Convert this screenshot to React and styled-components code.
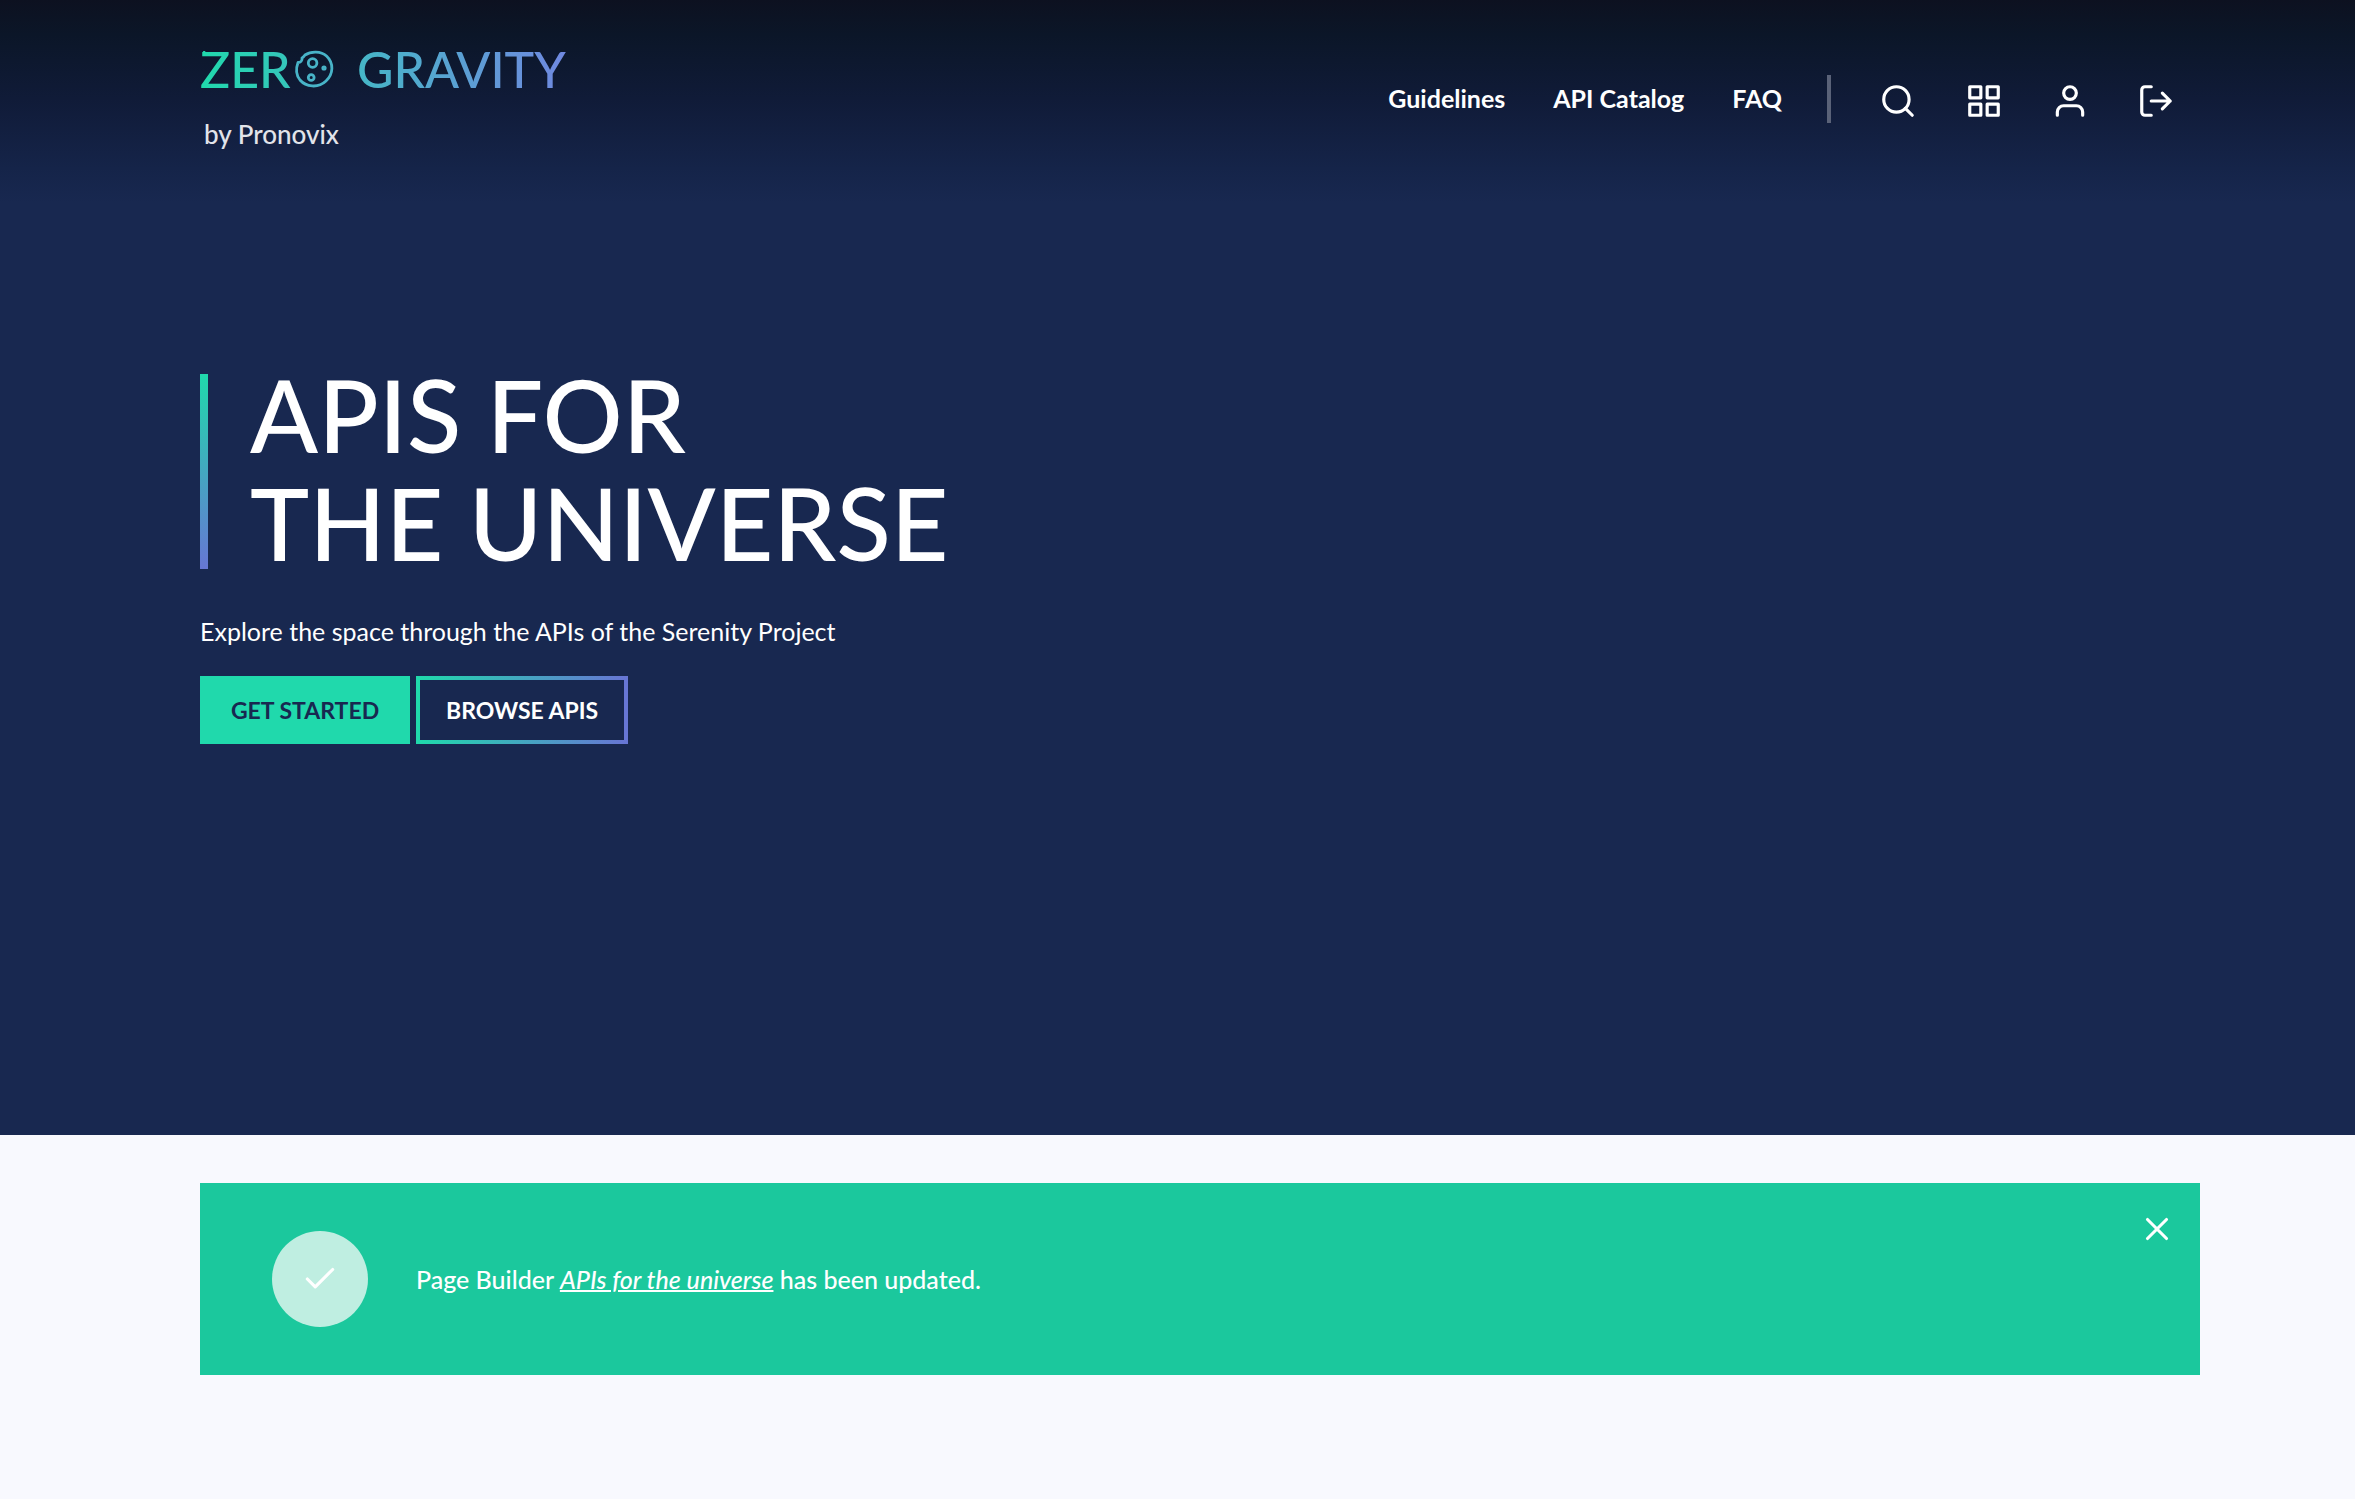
import React, { useState } from "react";
import styled, { createGlobalStyle } from "styled-components";

const GlobalStyle = createGlobalStyle`
  *, *::before, *::after { box-sizing: border-box; }
  body {
    margin: 0;
    background: #f8f9fe;
    font-family: Lato, "Open Sans", sans-serif;
    font-size: 25px;
    line-height: 36px;
    color: #fff;
  }
`;

const Hero = styled.div`
  background: #182850;
  padding-bottom: 391px;
`;

const Header = styled.header`
  display: flex;
  justify-content: space-between;
  align-items: flex-start;
  height: 216px;
  padding: 48px 155px 0 200px;
  background: linear-gradient(#0d1120, #0b1628 16%, #101b38 46%, #152449 78%, #182850 94%);
`;

const Brand = styled.a`
  display: flex;
  flex-direction: column;
  gap: 20px;
  color: #e2e4ea;
  text-decoration: none;
`;

const Wordmark = styled.svg`
  display: block;
  width: 368px;
  height: 48px;
  overflow: visible;
`;

const Byline = styled.span`
  padding-left: 4px;
  font-size: 26px;
  font-weight: 500;
  line-height: 36px;
`;

const HeaderRight = styled.div`
  display: flex;
  align-items: center;
  padding-top: 27px;
  padding-right: 25px;
`;

const MainNav = styled.nav`
  display: flex;
  gap: 48px;
  padding: 0 45px 2px 0;
`;

const NavLink = styled.a`
  color: #fff;
  font-weight: 700;
  text-decoration: none;
`;

const Tools = styled.div`
  display: flex;
  align-items: center;
  gap: 48px;
  height: 48px;
  padding: 4px 0 0 48px;
  border-left: 4px solid #5a6278;
`;

const IconButton = styled.button`
  display: flex;
  padding: 0;
  border: 0;
  background: none;
  color: #fff;
  cursor: pointer;
`;

const Glyph = styled.svg`
  display: block;
  width: 38px;
  height: 38px;
  fill: none;
  stroke: currentColor;
  stroke-width: 2;
  stroke-linecap: round;
  stroke-linejoin: round;
`;

const Intro = styled.main`
  padding: 158px 155px 0 200px;
`;

const TitleBar = styled.div`
  display: flex;
  align-items: center;
  height: 195px;
  padding: 0 0 8px 42px;
  border-left: 8px solid;
  border-image: linear-gradient(#20d9ac, #6776d4) 1;
`;

const Title = styled.h1`
  margin: 0;
  font-size: 100px;
  font-weight: 500;
  line-height: 108px;
  text-transform: uppercase;
`;

const Lead = styled.p`
  margin: 44px 0 27px;
`;

const Actions = styled.div`
  display: flex;
  gap: 6px;
`;

const Action = styled.a`
  display: flex;
  align-items: center;
  justify-content: center;
  min-width: 210px;
  height: 68px;
  padding: 0 26px;
  border: 4px solid;
  border-image: ${(p) => (p.$outline ? "linear-gradient(to right, #20d9ac, #6776d4) 1" : "none")};
  border-color: #20d9ac;
  background: ${(p) => (p.$outline ? "transparent" : "#20d9ac")};
  color: ${(p) => (p.$outline ? "#fff" : "#182850")};
  font-size: 23px;
  font-weight: 700;
  line-height: 32px;
  text-decoration: none;
  text-transform: uppercase;
`;

const Messages = styled.section`
  padding: 48px 155px 48px 200px;
`;

const Alert = styled.div`
  display: flex;
  align-items: flex-start;
  padding: 48px 24px 48px 72px;
  background: #1bc89d;
`;

const AlertBadge = styled.span`
  display: flex;
  align-items: center;
  justify-content: center;
  width: 96px;
  height: 96px;
  border-radius: 50%;
  background: #bfeee1;
`;

const AlertText = styled.p`
  flex: 1;
  align-self: center;
  margin: 0 0 0 48px;
  font-weight: 500;
`;

const AlertLink = styled.a`
  color: #fff;
  font-style: italic;
  text-decoration: underline;
  text-decoration-thickness: 2px;
`;

const CloseButton = styled(IconButton)`
  margin-top: -21px;
`;

function Logo() {
  return (
    <Wordmark viewBox="0 0 368 48" role="img" aria-label="Zero Gravity">
      <defs>
        <linearGradient id="brand" gradientUnits="userSpaceOnUse" x1="0" y1="0" x2="368" y2="0">
          <stop offset="0" stopColor="#20d9ac" />
          <stop offset="0.46" stopColor="#48b4c8" />
          <stop offset="1" stopColor="#7088e0" />
        </linearGradient>
      </defs>
      <g fill="url(#brand)" fontFamily="Lato, sans-serif" fontSize="50" fontWeight="500">
        <text x="0" y="40">ZER</text>
        <text x="157" y="40">GRAVITY</text>
      </g>
      <path d="M3 3C3 6 5 7.500 9 7.500L9 4C6 4.500 5 4 5 3Z" fill="#20d9ac" />
      <g fill="none" stroke="#48b4c8" strokeWidth="2.8" strokeLinecap="round" strokeLinejoin="round">
        <path d="M105 7C111 3 121 3 126.500 8C134 15 133.500 26 126 33C118 40.500 106 39 100 32C96 27 96 20 98 14.500C100.500 14.500 102.500 13 102 10C103 9.500 104 8.500 105 7Z" />
        <circle cx="112.600" cy="15" r="4.300" />
        <circle cx="111.200" cy="29.500" r="2.900" />
        <circle cx="124" cy="20" r="1.200" />
      </g>
    </Wordmark>
  );
}

const SearchIcon = () => (
  <Glyph viewBox="0 0 24 24"><circle cx="11" cy="11" r="8" /><path d="M21 21l-4.35-4.35" /></Glyph>
);
const GridIcon = () => (
  <Glyph viewBox="0 0 24 24"><path d="M3 3h7v7H3zM14 3h7v7h-7zM14 14h7v7h-7zM3 14h7v7H3z" /></Glyph>
);
const UserIcon = () => (
  <Glyph viewBox="0 0 24 24"><path d="M20 21v-2a4 4 0 0 0-4-4H8a4 4 0 0 0-4 4v2" /><circle cx="12" cy="7" r="4" /></Glyph>
);
const LogOutIcon = () => (
  <Glyph viewBox="0 0 24 24"><path d="M9 21H5a2 2 0 0 1-2-2V5a2 2 0 0 1 2-2h4M16 17l5-5-5-5M21 12H9" /></Glyph>
);
const CheckIcon = () => <Glyph viewBox="0 0 24 24"><path d="M20 6L9 17l-5-5" /></Glyph>;
const CloseIcon = () => <Glyph viewBox="0 0 24 24"><path d="M18 6L6 18M6 6l12 12" /></Glyph>;

const links = ["Guidelines", "API Catalog", "FAQ"];
const tools = [
  ["Search", SearchIcon],
  ["Dashboard", GridIcon],
  ["Account", UserIcon],
  ["Log out", LogOutIcon],
];

export default function App() {
  const [open, setOpen] = useState(true);
  return (
    <>
      <GlobalStyle />
      <Hero>
        <Header>
          <Brand href="#">
            <Logo />
            <Byline>by Pronovix</Byline>
          </Brand>
          <HeaderRight>
            <MainNav>
              {links.map((label) => (
                <NavLink href="#" key={label}>{label}</NavLink>
              ))}
            </MainNav>
            <Tools>
              {tools.map(([label, Icon]) => (
                <IconButton type="button" aria-label={label} key={label}><Icon /></IconButton>
              ))}
            </Tools>
          </HeaderRight>
        </Header>
        <Intro>
          <TitleBar>
            <Title>APIs for<br />the universe</Title>
          </TitleBar>
          <Lead>Explore the space through the APIs of the Serenity Project</Lead>
          <Actions>
            <Action href="#">Get started</Action>
            <Action href="#" $outline>Browse APIs</Action>
          </Actions>
        </Intro>
      </Hero>
      <Messages>
        {open && (
          <Alert role="status">
            <AlertBadge><CheckIcon /></AlertBadge>
            <AlertText>
              Page Builder <AlertLink href="#">APIs for the universe</AlertLink> has been updated.
            </AlertText>
            <CloseButton type="button" aria-label="Close message" onClick={() => setOpen(false)}>
              <CloseIcon />
            </CloseButton>
          </Alert>
        )}
      </Messages>
    </>
  );
}
